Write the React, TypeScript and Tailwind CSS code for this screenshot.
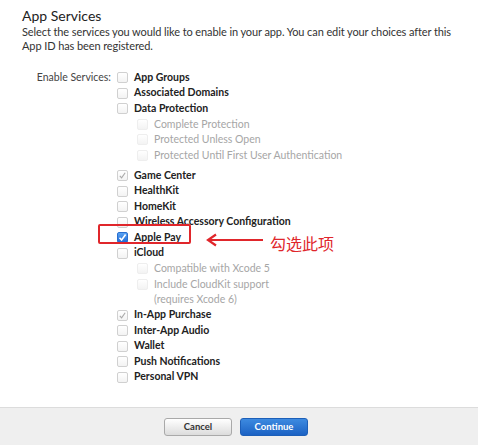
import React from "react";

type Item = { label: string; checked?: "blue" | "gray"; sub?: string[][]; gapBefore?: boolean };

const items: Item[] = [
  { label: "App Groups" },
  { label: "Associated Domains" },
  {
    label: "Data Protection",
    sub: [["Complete Protection"], ["Protected Unless Open"], ["Protected Until First User Authentication"]],
  },
  { label: "Game Center", checked: "gray", gapBefore: true },
  { label: "HealthKit" },
  { label: "HomeKit" },
  { label: "Wireless Accessory Configuration" },
  { label: "Apple Pay", checked: "blue" },
  { label: "iCloud", sub: [["Compatible with Xcode 5"], ["Include CloudKit support", "(requires Xcode 6)"]] },
  { label: "In-App Purchase", checked: "gray" },
  { label: "Inter-App Audio" },
  { label: "Wallet" },
  { label: "Push Notifications" },
  { label: "Personal VPN" },
];

function Box({ checked, faint }: { checked?: "blue" | "gray"; faint?: boolean }) {
  if (checked === "blue") {
    return (
      <span className="flex h-[11px] w-[11px] shrink-0 items-center justify-center rounded-[2px] border border-[#2a6fd0] bg-gradient-to-b from-[#5aa2f2] to-[#1f6bd6]">
        <svg width="9" height="9" viewBox="0 0 9 9">
          <path d="M1.5 4.8 L3.6 7 L7.6 1.6" fill="none" stroke="#fff" strokeWidth="1.6" />
        </svg>
      </span>
    );
  }
  return (
    <span
      className={`flex h-[11px] w-[11px] shrink-0 items-center justify-center rounded-[2px] border bg-gradient-to-b from-white to-[#f3f3f3] ${
        faint ? "border-[#eeeeee]" : "border-[#d0d0d0]"
      }`}
    >
      {checked === "gray" && (
        <svg width="9" height="9" viewBox="0 0 9 9">
          <path d="M1.8 4.9 L3.6 6.8 L7.2 1.8" fill="none" stroke="#a9a9a9" strokeWidth="1.1" />
        </svg>
      )}
    </span>
  );
}

export default function App() {
  return (
    <div
      className="flex h-[445px] w-[478px] flex-col overflow-hidden bg-white text-[#333]"
      style={{ fontFamily: 'Lato, "Noto Sans CJK SC", sans-serif' }}
    >
      <div className="flex-1 px-[22px] pt-[6px]">
        <h2 className="text-[14px] leading-[19px] text-[#222]">App Services</h2>
        <p className="text-[11px] leading-[14px] tracking-[-0.1px] text-[#333]">
          Select the services you would like to enable in your app. You can edit your choices after this App ID has
          been registered.
        </p>

        <div className="mt-[17px] flex">
          <div className="w-[95px] pr-[6px] text-right text-[10.5px] leading-[15.4px] text-[#444]">Enable Services:</div>
          <div className="relative flex flex-col">
            {items.map((it) => (
              <div key={it.label} className={it.gapBefore ? "mt-[5px]" : ""}>
                <div className="relative flex h-[15.5px] items-center gap-[6px]">
                  <Box checked={it.checked} />
                  <span className="text-[10.5px] font-bold text-[#222]">{it.label}</span>
                  {it.checked === "blue" && (
                    <>
                      <span className="absolute left-[-19px] top-[-6px] h-[20px] w-[93px] rounded-[2px] border-2 border-[#e0262b]" />
                      <span className="absolute left-[88px] top-[-4px] flex items-center whitespace-nowrap">
                        <svg width="60" height="14" viewBox="0 0 60 14">
                          <path d="M58 7 L4 7" stroke="#e0262b" strokeWidth="2.2" />
                          <path d="M11 1.5 L3 7 L11 12.5" fill="none" stroke="#e0262b" strokeWidth="2.2" />
                        </svg>
                        <span className="ml-[5px] mt-[8px] text-[16px] leading-[20px] text-[#e0262b]">勾选此项</span>
                      </span>
                    </>
                  )}
                </div>
                {it.sub && (
                  <div className="flex flex-col pl-[20px]">
                    {it.sub.map((s) => (
                      <div key={s[0]} className="flex items-start gap-[6px]">
                        <span className="mt-[2px]">
                          <Box faint />
                        </span>
                        <span className="text-[10.5px] leading-[15.5px] text-[#a6a6a6]">
                          {s.map((line) => (
                            <div key={line}>{line}</div>
                          ))}
                        </span>
                      </div>
                    ))}
                  </div>
                )}
              </div>
            ))}
          </div>
        </div>
      </div>

      <div className="flex h-[38px] items-center justify-center gap-[8px] border-t border-[#dcdcdc] bg-[#efefef] pt-[1px] pr-[6px]">
        <button className="h-[18px] w-[68px] rounded-[3px] border border-[#a9a9a9] bg-gradient-to-b from-white to-[#dcdcdc] text-[9.5px] font-bold text-[#333]">
          Cancel
        </button>
        <button className="h-[18px] w-[68px] rounded-[3px] border border-[#1d5fb8] bg-gradient-to-b from-[#3d8ae0] to-[#1c62c4] text-[9.5px] font-bold text-white">
          Continue
        </button>
      </div>
    </div>
  );
}
